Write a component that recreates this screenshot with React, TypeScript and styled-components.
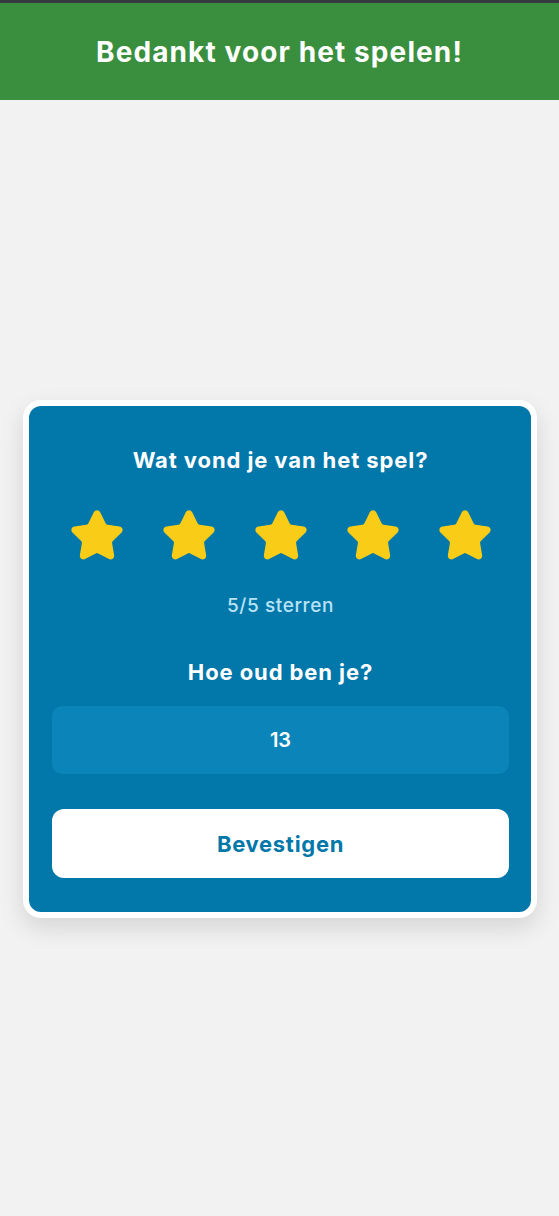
import React, { useState } from "react";
import styled, { createGlobalStyle } from "styled-components";
import { Star } from "lucide-react";

const GlobalStyle = createGlobalStyle`
  html, body {
    margin: 0;
    padding: 0;
    background: #f2f2f2;
    font-family: "Inter", "Noto Sans", sans-serif;
  }
  #root { min-height: 100vh; }
  * { box-sizing: border-box; }
`;

const Page = styled.div`
  min-height: 100vh;
  display: flex;
  flex-direction: column;
  background: #f2f2f2;
  border-top: 3px solid #343a40;
`;

const Header = styled.header`
  height: 97px;
  background: #3a8f3e;
  display: flex;
  align-items: center;
  justify-content: center;
`;

const Title = styled.h1`
  margin: 0;
  color: #ffffff;
  font-size: 28px;
  font-weight: 700;
  letter-spacing: 1.1px;
`;

const Main = styled.main`
  flex: 1;
  display: flex;
  align-items: center;
  justify-content: center;
  padding: 2px 22px 0 23px;
`;

const Card = styled.section`
  width: 100%;
  background: #0277a9;
  border: 6px solid #ffffff;
  border-radius: 18px;
  box-shadow: 0 10px 24px rgba(0, 0, 0, 0.12);
  padding: 40px 22px 34px 23px;
  display: flex;
  flex-direction: column;
  align-items: stretch;
`;

const Question = styled.h2<{ $top?: number }>`
  margin: ${(p) => p.$top ?? 0}px 0 0;
  color: #ffffff;
  font-size: 22px;
  line-height: 28px;
  font-weight: 700;
  letter-spacing: 0.9px;
  text-align: center;
`;

const StarRow = styled.div`
  margin-top: 34px;
  display: flex;
  justify-content: center;
  gap: 36px;
`;

const StarButton = styled.button`
  border: none;
  background: none;
  padding: 0;
  cursor: pointer;
  display: flex;
  color: #f9cd17;
`;

const RatingText = styled.p`
  margin: 30px 0 0;
  color: #b8e3f7;
  font-size: 19px;
  line-height: 24px;
  font-weight: 500;
  letter-spacing: 0.6px;
  text-align: center;
`;

const AgeInput = styled.input`
  margin-top: 20px;
  height: 68px;
  width: 100%;
  border: none;
  outline: none;
  border-radius: 10px;
  background: #0b85b9;
  color: #ffffff;
  font-family: inherit;
  font-size: 20px;
  font-weight: 600;
  text-align: center;
`;

const SubmitButton = styled.button`
  margin-top: 35px;
  height: 69px;
  width: 100%;
  border: none;
  border-radius: 12px;
  background: #ffffff;
  color: #0277a9;
  font-family: inherit;
  font-size: 22px;
  font-weight: 700;
  letter-spacing: 0.7px;
  cursor: pointer;
`;

export default function App() {
  const [rating, setRating] = useState(5);
  const [age, setAge] = useState("13");
  return (
    <>
      <GlobalStyle />
      <Page>
        <Header>
          <Title>Bedankt voor het spelen!</Title>
        </Header>
        <Main>
          <Card>
            <Question>Wat vond je van het spel?</Question>
            <StarRow>
              {[1, 2, 3, 4, 5].map((n) => (
                <StarButton key={n} onClick={() => setRating(n)} aria-label={`${n} sterren`}>
                  <Star size={56} fill={n <= rating ? "#f9cd17" : "none"} strokeWidth={2} />
                </StarButton>
              ))}
            </StarRow>
            <RatingText>{rating}/5 sterren</RatingText>
            <Question $top={40}>Hoe oud ben je?</Question>
            <AgeInput value={age} onChange={(e) => setAge(e.target.value)} />
            <SubmitButton>Bevestigen</SubmitButton>
          </Card>
        </Main>
      </Page>
    </>
  );
}
